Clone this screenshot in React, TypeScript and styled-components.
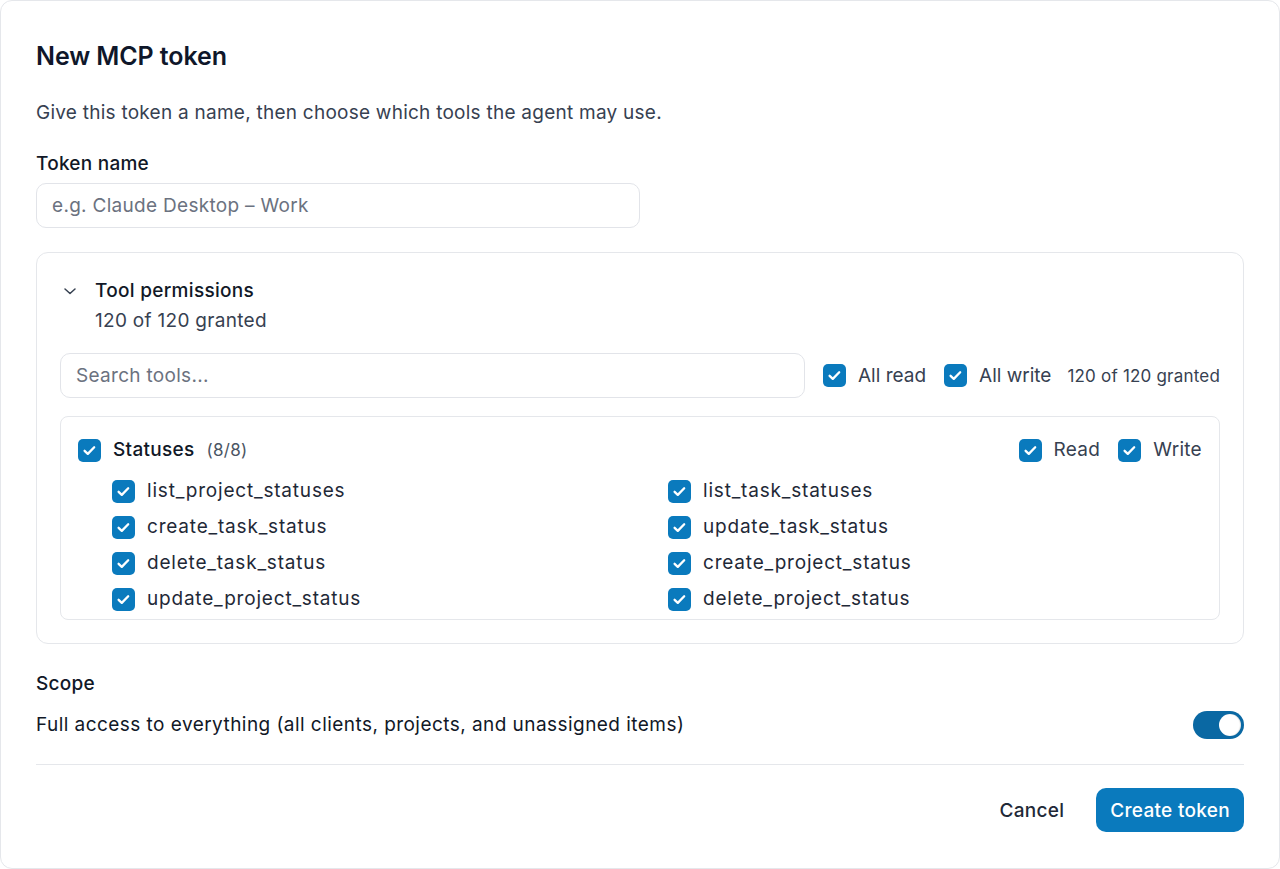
import React from "react";
import styled, { createGlobalStyle } from "styled-components";

const GlobalStyle = createGlobalStyle`
  html, body {
    margin: 0;
    padding: 0;
    background: #ffffff;
  }
  body {
    font-family: Inter, "Noto Sans", "Liberation Sans", sans-serif;
    color: #111827;
    letter-spacing: 0.3px;
  }
  * {
    box-sizing: border-box;
  }
`;

const Dialog = styled.div`
  width: 1280px;
  height: 869px;
  border: 1px solid #e5e7eb;
  border-radius: 12px;
  padding: 39px 35px 36px;
  display: flex;
  flex-direction: column;
  background: #fff;
`;

const Title = styled.h1`
  margin: 0;
  font-size: 25px;
  line-height: 32px;
  font-weight: 600;
  color: #0f172a;
  letter-spacing: -0.1px;
`;

const Lead = styled.p`
  margin: 27px 0 0;
  font-size: 19px;
  line-height: 28px;
  color: #374151;
  letter-spacing: 0.25px;
`;

const Label = styled.div<{ $top: number }>`
  margin-top: ${(p) => p.$top}px;
  font-size: 19px;
  line-height: 24px;
  font-weight: 500;
  color: #111827;
  letter-spacing: 0.25px;
`;

const TextInput = styled.input`
  height: 45px;
  border: 1px solid #e2e4e9;
  border-radius: 10px;
  padding: 0 15px;
  font-family: inherit;
  font-size: 19px;
  letter-spacing: 0.3px;
  color: #111827;
  outline: none;
  background: #fff;

  &::placeholder {
    color: #6b7280;
  }
`;

const NameInput = styled(TextInput)`
  margin-top: 7px;
  width: 604px;
`;

const Panel = styled.section`
  margin-top: 24px;
  border: 1px solid #e5e7eb;
  border-radius: 12px;
  padding: 26px 23px 23px;
`;

const PanelHead = styled.div`
  display: flex;
  align-items: flex-start;
  gap: 17px;
  padding-left: 2px;
`;

const Chevron = styled.span`
  display: flex;
  width: 16px;
  height: 24px;
  align-items: center;
  color: #374151;
`;

const HeadText = styled.div`
  display: flex;
  flex-direction: column;
  gap: 6px;
`;

const HeadTitle = styled.div`
  font-size: 19px;
  line-height: 24px;
  font-weight: 500;
  color: #111827;
`;

const HeadMeta = styled.div`
  font-size: 19px;
  line-height: 24px;
  color: #374151;
`;

const SearchRow = styled.div`
  margin-top: 20px;
  display: flex;
  align-items: center;
  gap: 18px;
`;

const SearchInput = styled(TextInput)`
  flex: 1;
  min-width: 0;
`;

const CheckLabel = styled.label<{ $tight?: boolean }>`
  display: flex;
  align-items: center;
  gap: 12px;
  font-size: 19px;
  line-height: 24px;
  color: #374151;
  letter-spacing: ${(p) => (p.$tight ? "0" : "0.3px")};
  white-space: nowrap;
  cursor: pointer;
`;

const BulkGroup = styled.div`
  display: flex;
  align-items: center;
  gap: 18px;
`;

const SmallMeta = styled.span`
  font-size: 17px;
  color: #374151;
  letter-spacing: 0.2px;
  white-space: nowrap;
  margin-left: -2px;
`;

const Group = styled.div`
  margin-top: 18px;
  border: 1px solid #e5e7eb;
  border-radius: 8px;
  padding: 15px 17px 8px;
`;

const GroupHead = styled.div`
  display: flex;
  align-items: center;
  justify-content: space-between;
  height: 36px;
`;

const GroupName = styled.span`
  font-weight: 500;
  color: #111827;
`;

const Count = styled.span`
  font-size: 17px;
  font-weight: 400;
  color: #4b5563;
`;

const ToolGrid = styled.div`
  margin-top: 11px;
  margin-left: 34px;
  display: grid;
  grid-template-columns: 532px 1fr;
  column-gap: 24px;
  row-gap: 12px;
`;

const ToolName = styled.span`
  color: #1f2937;
  letter-spacing: 0.8px;
`;

const Box = styled.span`
  display: inline-flex;
  flex: none;
  width: 23px;
  height: 23px;
`;

const ScopeRow = styled.div`
  margin-top: 15px;
  display: flex;
  align-items: center;
  justify-content: space-between;
  font-size: 19px;
  line-height: 24px;
  color: #111827;
  letter-spacing: 0.45px;
`;

const Switch = styled.button<{ $on: boolean }>`
  width: 51px;
  height: 28px;
  border-radius: 14px;
  border: none;
  padding: 3px;
  display: flex;
  justify-content: ${(p) => (p.$on ? "flex-end" : "flex-start")};
  background: ${(p) => (p.$on ? "#0a68a3" : "#d1d5db")};
  cursor: pointer;
`;

const Knob = styled.span`
  width: 22px;
  height: 22px;
  border-radius: 50%;
  background: #fff;
  box-shadow: inset -1px 0 1px rgba(0, 0, 0, 0.12);
`;

const Divider = styled.hr`
  margin: 25px 0 0;
  border: none;
  border-top: 1px solid #e5e7eb;
`;

const Footer = styled.div`
  margin-top: 23px;
  display: flex;
  justify-content: flex-end;
  align-items: center;
  gap: 18px;
`;

const Button = styled.button<{ $primary?: boolean }>`
  height: 44px;
  padding: 0 14px;
  border-radius: 10px;
  border: none;
  font-family: inherit;
  font-size: 19px;
  letter-spacing: 0.3px;
  font-weight: 500;
  background: ${(p) => (p.$primary ? "#0a7abd" : "transparent")};
  color: ${(p) => (p.$primary ? "#ffffff" : "#1f2937")};
  cursor: pointer;
`;

const Check = () => (
  <Box>
    <svg width="23" height="23" viewBox="0 0 23 23" aria-hidden="true">
      <rect x="0" y="0" width="23" height="23" rx="5" fill="#0a7abd" />
      <path
        d="M6.6 11.8l3.2 3.1 6.4-6.6"
        fill="none"
        stroke="#fff"
        strokeWidth="2.3"
        strokeLinecap="round"
        strokeLinejoin="round"
      />
    </svg>
  </Box>
);

const tools = [
  "list_project_statuses",
  "list_task_statuses",
  "create_task_status",
  "update_task_status",
  "delete_task_status",
  "create_project_status",
  "update_project_status",
  "delete_project_status",
];

const App = () => {
  return (
    <>
      <GlobalStyle />
      <Dialog>
        <Title>New MCP token</Title>
        <Lead>Give this token a name, then choose which tools the agent may use.</Lead>

        <Label $top={25}>Token name</Label>
        <NameInput placeholder="e.g. Claude Desktop – Work" />

        <Panel>
          <PanelHead>
            <Chevron>
              <svg width="16" height="16" viewBox="0 0 16 16" aria-hidden="true">
                <path
                  d="M3 6l5 4.5L13 6"
                  fill="none"
                  stroke="currentColor"
                  strokeWidth="1.5"
                  strokeLinecap="round"
                  strokeLinejoin="round"
                />
              </svg>
            </Chevron>
            <HeadText>
              <HeadTitle>Tool permissions</HeadTitle>
              <HeadMeta>120 of 120 granted</HeadMeta>
            </HeadText>
          </PanelHead>

          <SearchRow>
            <SearchInput placeholder="Search tools..." />
            <BulkGroup>
              <CheckLabel $tight>
                <Check />
                All read
              </CheckLabel>
              <CheckLabel $tight>
                <Check />
                All write
              </CheckLabel>
              <SmallMeta>120 of 120 granted</SmallMeta>
            </BulkGroup>
          </SearchRow>

          <Group>
            <GroupHead>
              <CheckLabel>
                <Check />
                <GroupName>Statuses</GroupName>
                <Count>(8/8)</Count>
              </CheckLabel>
              <BulkGroup>
                <CheckLabel>
                  <Check />
                  Read
                </CheckLabel>
                <CheckLabel>
                  <Check />
                  Write
                </CheckLabel>
              </BulkGroup>
            </GroupHead>
            <ToolGrid>
              {tools.map((t) => (
                <CheckLabel key={t}>
                  <Check />
                  <ToolName>{t}</ToolName>
                </CheckLabel>
              ))}
            </ToolGrid>
          </Group>
        </Panel>

        <Label $top={28}>Scope</Label>
        <ScopeRow>
          <span>Full access to everything (all clients, projects, and unassigned items)</span>
          <Switch $on aria-label="Full access">
            <Knob />
          </Switch>
        </ScopeRow>

        <Divider />

        <Footer>
          <Button>Cancel</Button>
          <Button $primary>Create token</Button>
        </Footer>
      </Dialog>
    </>
  );
};

export default App;
